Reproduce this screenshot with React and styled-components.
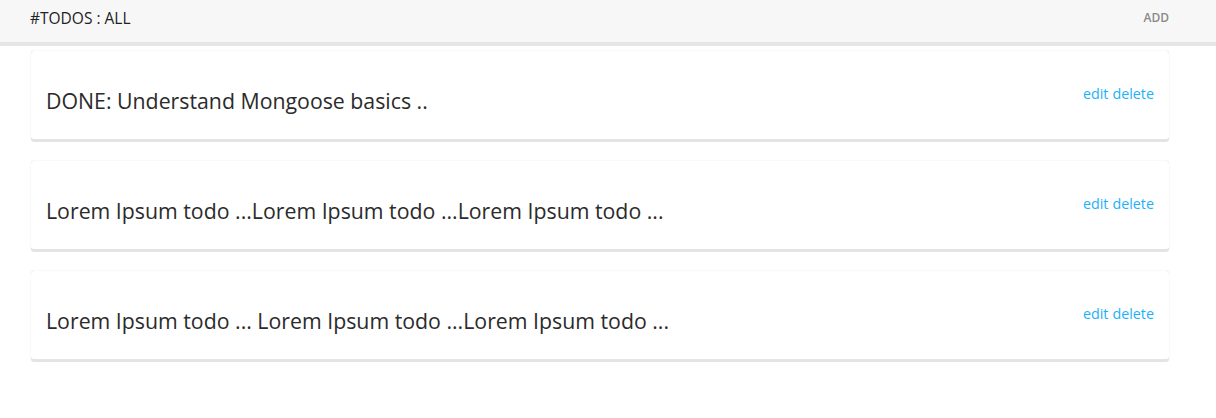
import styled, { createGlobalStyle } from 'styled-components';

const GlobalStyle = createGlobalStyle`
  html, body {
    margin: 0;
    padding: 0;
    background: #ffffff;
    font-family: "Open Sans", "Liberation Sans", sans-serif;
  }
`

const Page = styled.div`
  width: 1216px;
  min-height: 418px;
  background: #ffffff;
`

const Header = styled.header`
  height: 42px;
  background: #f7f7f7;
  border-bottom: 4px solid #e6e6e6;
`

const HeaderInner = styled.div`
  width: 1139px;
  margin-left: 30px;
  height: 100%;
  display: flex;
  align-items: center;
  justify-content: space-between;
`

const Title = styled.span`
  font-size: 15.5px;
  color: #222;
  margin-top: -7px;
`

const AddButton = styled.span`
  font-size: 12px;
  color: #8a8a8a;
  font-weight: 600;
  margin-top: -7px;
`

const List = styled.main`
  width: 1138px;
  margin-left: 31px;
  padding-top: 5px;
  display: flex;
  flex-direction: column;
  gap: 22px;
`

const Card = styled.div`
  height: 88px;
  background: #ffffff;
  border-radius: 3px;
  box-shadow: 0 3px 0 #e4e4e4, 0 0 1px rgba(0, 0, 0, 0.25);
  display: flex;
  align-items: center;
  justify-content: space-between;
  padding: 0 15px;
  box-sizing: border-box;
`

const TodoText = styled.h3`
  margin: 0;
  padding-top: 10px;
  font-size: 21.3px;
  font-weight: 400;
  color: #2b2b2b;
`

const Actions = styled.div`
  display: flex;
  gap: 4px;
  font-size: 14.3px;
  color: #1cb1fa;
  margin-top: -3px;
`

const ActionLink = styled.a`
  color: inherit;
  text-decoration: none;
  cursor: pointer;
`

const todos = [
  { id: 1, text: 'DONE: Understand Mongoose basics ..' },
  { id: 2, text: 'Lorem Ipsum todo ...Lorem Ipsum todo ...Lorem Ipsum todo ...' },
  { id: 3, text: 'Lorem Ipsum todo ... Lorem Ipsum todo ...Lorem Ipsum todo ...' },
]

function App() {
  return (
    <Page>
      <GlobalStyle />
      <Header>
        <HeaderInner>
          <Title>#TODOS : ALL</Title>
          <AddButton>ADD</AddButton>
        </HeaderInner>
      </Header>
      <List>
        {todos.map(todo => (
          <Card key={todo.id}>
            <TodoText>{todo.text}</TodoText>
            <Actions>
              <ActionLink>edit</ActionLink>
              <ActionLink>delete</ActionLink>
            </Actions>
          </Card>
        ))}
      </List>
    </Page>
  )
}

export default App;
